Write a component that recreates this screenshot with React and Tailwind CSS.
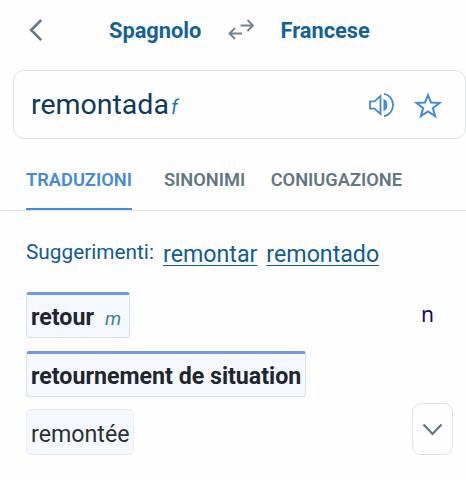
const tabs = ['TRADUZIONI', 'SINONIMI', 'CONIUGAZIONE']

function Header() {
  return (
    <header className="flex h-[70px] items-start pt-[18px] text-[21.8px] leading-[26px] font-bold text-[#13639b]">
      <button className="ml-[29px] w-[80px]" aria-label="Indietro">
        <svg width="14" height="24" viewBox="0 0 14 24" fill="none" stroke="#64798a" strokeWidth="2.6">
          <path d="M12.2 2 2.2 12l10 10.2" />
        </svg>
      </button>
      <span className="w-[119px]">Spagnolo</span>
      <svg className="mt-px w-[26px]" height="22" viewBox="0 0 26 22" fill="none" stroke="#6f8391" strokeWidth="1.9">
        <path d="M12.5 6.5h12M19.5 1l5.5 5.5-5.5 5.5M14 14.500H2M7 9l-5.500 5.500L7 20" />
      </svg>
      <span className="ml-[26.5px]">Francese</span>
    </header>
  )
}

function SearchBox() {
  return (
    <div className="ml-[13px] flex h-[69px] items-center rounded-[11px] border border-[#dde3e6] pl-[17px] text-[#0e3a5b]">
      <span className="text-[28.500px] leading-[36px]">remontada</span>
      <span className="ml-[2px] mt-[5px] text-[20px] leading-[24px] italic text-[#1878b0]">f</span>
      <svg className="ml-auto mr-[19px] mt-px" width="27" height="26" viewBox="0 0 27 26" fill="none" stroke="#428bd5" strokeWidth="1.8">
        <path d="M2 9.300h4.500L12.500 4v18l-6-5.300H2z" />
        <path d="M15.500 7c5.200.8 5.200 11.200 0 12z" fill="#428bd5" stroke="none" />
        <path d="M16 1.800c4.800.6 9 5 9 11.200s-4.200 10.600-9 11.200" />
      </svg>
      <svg className="mr-[23px] mt-[2px]" width="28" height="27" viewBox="0 0 28 27" fill="none" stroke="#428bd5" strokeWidth="2">
        <path d="m14 3 3 7.600 8.500.4-6.700 5.100 2.400 8L14 19.500l-7.200 4.600 2.400-8L2.500 11l8.500-.4z" />
      </svg>
    </div>
  )
}

function Tabs() {
  return (
    <nav className="flex h-[72px] items-end border-b border-[#e3e5e7] text-[18.250px] leading-[22px] font-semibold text-[#617883]">
      {tabs.map((tab, i) => (
        <button
          key={tab}
          className={
            i === 0
              ? 'ml-[26px] mr-[32px] h-[42px] border-b-2 border-[#438bd3] pb-[16px] text-[#438bd3]'
              : 'mr-[25.5px] h-[42px] pb-[18px]'
          }
        >
          {tab}
        </button>
      ))}
    </nav>
  )
}

export default function App() {
  return (
    <div className="h-[480px] w-[466px] overflow-hidden bg-[#fefefe] font-[Roboto,sans-serif]">
      <Header />
      <SearchBox />
      <Tabs />
      <main className="pl-[26px] pt-[27px]">
        <div className="flex h-[54px] items-start text-[#125c90]">
          <span className="w-[137px] text-[20.800px] leading-[28px]">Suggerimenti:</span>
          <a className="mr-[9px] mt-[2px] text-[23.200px] leading-[28px] underline decoration-1 underline-offset-[3px]">remontar</a>
          <a className="mt-[2px] text-[23.200px] leading-[28px] underline decoration-1 underline-offset-[3px]">remontado</a>
        </div>
        <div className="flex justify-between pr-[32px]">
          <div className="flex h-[46px] items-baseline rounded-[3px] border border-t-[3px] border-[#d5e1ef] border-t-[#7199df] bg-[#f5f9ff] px-[4px] pt-[8px] text-[23.200px] leading-[28px] font-bold text-[#20262d]">
            retour
            <span className="ml-[11px] mr-[4px] text-[19px] font-normal italic text-[#377f9c]">m</span>
          </div>
          <span className="pt-[7px] font-['Noto_Sans',sans-serif] text-[21px] leading-[30px] text-[#160c70]">n</span>
        </div>
        <div className="mt-[13px] h-[46px] w-fit rounded-[3px] border border-t-[3px] border-[#d5e1ef] border-t-[#7199df] bg-[#f5f9ff] px-[4px] pt-[8px] text-[23.200px] leading-[28px] font-bold text-[#20262d]">
          retournement de situation
        </div>
        <div className="flex justify-between pr-[13px]">
          <div className="mt-[12px] h-[46px] rounded-[5px] border border-[#e6edf4] bg-[#f5f9ff] px-[4px] pt-[10px] text-[23.200px] leading-[28px] text-[#2b3035]">
            remontée
          </div>
          <button className="mt-[6px] flex h-[52px] w-[41px] items-center justify-center rounded-[9px] border border-[#dfe3e5]" aria-label="Mostra altro">
            <svg width="21" height="13" viewBox="0 0 21 13" fill="none" stroke="#5f7683" strokeWidth="2.2">
              <path d="m1.500 1.500 9 9.500 9-9.500" />
            </svg>
          </button>
        </div>
      </main>
    </div>
  )
}
